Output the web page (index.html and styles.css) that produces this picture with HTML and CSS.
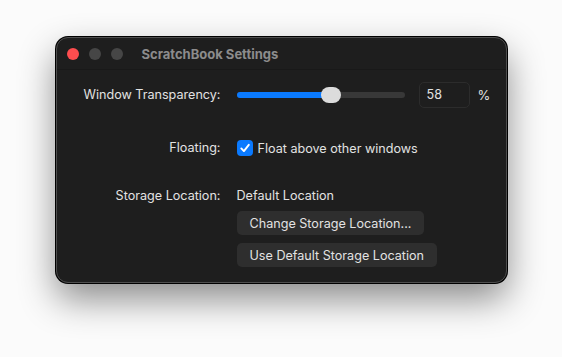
FILE: index.html
```html
<!DOCTYPE html>
<html lang="en">
<head>
    <meta charset="UTF-8">
    <title>ScratchBook Settings</title>
    <link rel="stylesheet" href="styles.css">
</head>
<body>
    <div class="window">
        <div class="titlebar">
            <div class="lights">
                <span class="light close"></span>
                <span class="light"></span>
                <span class="light"></span>
            </div>
            <div class="title">ScratchBook Settings</div>
        </div>

        <div class="form">
            <div class="label">Window Transparency:</div>
            <div class="control row-slider">
                <div class="slider">
                    <div class="fill" style="width: 56%"></div>
                    <div class="thumb" style="left: 56%"></div>
                </div>
                <div class="field">58</div>
                <span class="unit">%</span>
            </div>

            <div class="label floating-label">Floating:</div>
            <div class="control floating-row">
                <span class="checkbox">
                    <svg width="12" height="12" viewBox="0 0 12 12">
                        <path d="M2.3 6.4 L4.9 9.1 L9.8 2.8" fill="none" stroke="#fff" stroke-width="1.9" stroke-linecap="round" stroke-linejoin="round"/>
                    </svg>
                </span>
                <span>Float above other windows</span>
            </div>

            <div class="label storage-label">Storage Location:</div>
            <div class="control storage">
                <div class="value">Default Location</div>
                <button>Change Storage Location...</button>
                <button>Use Default Storage Location</button>
            </div>
        </div>
    </div>
</body>
</html>
```

FILE: styles.css
```css
body {
    margin: 0;
    width: 562px;
    height: 357px;
    background: #fbfbfb;
    font-family: Inter, "Noto Sans", sans-serif;
    font-size: 12.6px;
    color: #e2e2e2;
    display: flex;
    justify-content: center;
    align-items: flex-start;
    padding-top: 37px;
    box-sizing: border-box;
}
.window {
    width: 451px;
    height: 246px;
    box-sizing: border-box;
    background: #1e1e1e;
    border: 1px solid #4e4e4e;
    border-radius: 12px;
    box-shadow: 0 0 0 1px #000, 0 16px 36px rgba(0, 0, 0, 0.45);
}
.titlebar {
    height: 31px;
    display: flex;
    align-items: center;
    border-bottom: 1px solid #191919;
}
.lights {
    display: flex;
    gap: 10px;
    padding-left: 10px;
}
.light {
    width: 12px;
    height: 12px;
    border-radius: 50%;
    background: #464646;
}
.light.close {
    background: #fe4d4f;
}
.title {
    margin-left: 19px;
    font-size: 13px;
    font-weight: 700;
    color: #8c8c8c;
}
.form {
    display: grid;
    grid-template-columns: 164px 1fr;
    column-gap: 16px;
    padding-top: 12px;
}
.label {
    text-align: right;
    line-height: 26px;
}
.control {
    display: flex;
    align-items: center;
}
.row-slider {
    height: 26px;
}
.slider {
    position: relative;
    width: 168px;
    height: 6px;
    border-radius: 3px;
    background: #383838;
}
.fill {
    height: 100%;
    border-radius: 3px;
    background: #0a7aff;
}
.thumb {
    position: absolute;
    top: -5px;
    width: 20px;
    height: 16px;
    margin-left: -10px;
    border-radius: 8px;
    background: #dcdcdc;
}
.field {
    margin-left: 14px;
    width: 51px;
    height: 26px;
    box-sizing: border-box;
    border: 1px solid #2c2c2c;
    border-radius: 5px;
    padding-left: 7px;
    line-height: 24px;
}
.unit {
    margin-left: 8px;
    font-size: 13px;
}
.floating-label {
    margin-top: 27px;
}
.floating-row {
    margin-top: 27px;
    height: 26px;
    gap: 5px;
}
.checkbox {
    width: 16px;
    height: 16px;
    border-radius: 4px;
    background: #0a7aff;
    display: flex;
    align-items: center;
    justify-content: center;
}
.storage-label {
    margin-top: 22px;
}
.storage {
    margin-top: 22px;
    flex-direction: column;
    align-items: flex-start;
}
.value {
    line-height: 26px;
}
button {
    font-family: inherit;
    font-size: 12.6px;
    color: #e2e2e2;
    background: #2e2e2e;
    border: none;
    border-radius: 5px;
    height: 24px;
    padding: 0 13px;
    margin-top: 8px;
}
button:first-of-type {
    margin-top: 2px;
}
```
